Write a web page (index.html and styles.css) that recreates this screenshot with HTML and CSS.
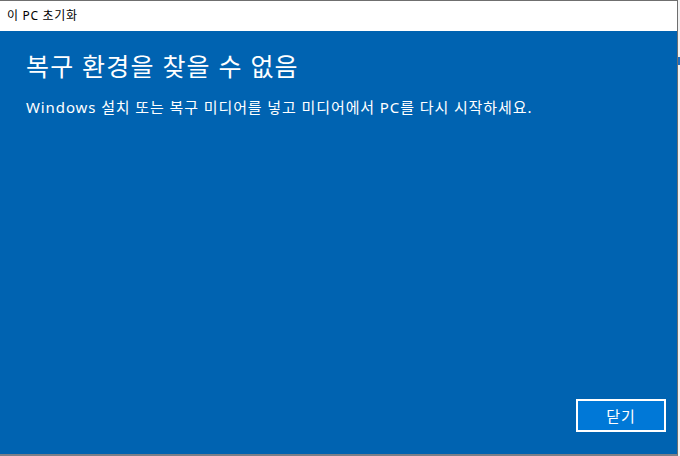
FILE: index.html
```html
<!DOCTYPE html>
<html lang="ko">
<head>
<meta charset="utf-8">
<title>이 PC 초기화</title>
<link rel="stylesheet" href="styles.css">
</head>
<body>
<div class="screen">
  <div class="window">
    <div class="titlebar">이 PC 초기화</div>
    <div class="content">
      <h1 class="heading">복구 환경을 찾을 수 없음</h1>
      <p class="message">Windows 설치 또는 복구 미디어를 넣고 미디어에서 PC를 다시 시작하세요.</p>
      <div class="footer">
        <button class="close-btn">닫기</button>
      </div>
    </div>
  </div>
  <div class="behind-mark"></div>
</div>
</body>
</html>
```

FILE: styles.css
```css
html, body {
  margin: 0;
  padding: 0;
}
body {
  width: 680px;
  height: 456px;
  overflow: hidden;
  background: #f3f3f3;
  font-family: "Noto Sans", "Noto Sans CJK KR", sans-serif;
}
.screen {
  position: relative;
  width: 680px;
  height: 456px;
}
.window {
  box-sizing: border-box;
  width: 678px;
  height: 456px;
  border-top: 1px solid #6f6f6f;
  border-right: 1px solid #6f6f6f;
  border-bottom: 2px solid #7c7f88;
  display: flex;
  flex-direction: column;
}
.titlebar {
  height: 30px;
  flex: none;
  background: #ffffff;
  color: #000;
  font-size: 12px;
  line-height: 30px;
  padding-left: 7px;
  letter-spacing: 0.7px;
}
.content {
  flex: 1;
  background: #0063b1;
  color: #ffffff;
  padding: 18px 11px 22px 26px;
  display: flex;
  flex-direction: column;
}
.heading {
  margin: 0;
  font-size: 25px;
  font-weight: normal;
  line-height: 34px;
  letter-spacing: 1.2px;
}
.message {
  margin: 14px 0 0;
  font-size: 15px;
  line-height: 20px;
  letter-spacing: 0.9px;
}
.footer {
  margin-top: auto;
  display: flex;
  justify-content: flex-end;
}
.close-btn {
  box-sizing: border-box;
  width: 90px;
  height: 33px;
  border: 2px solid #ffffff;
  background: #0078d7;
  color: #ffffff;
  font-family: "Noto Sans CJK KR", sans-serif;
  font-size: 15px;
  letter-spacing: 1px;
  padding: 0;
}
.behind-mark {
  position: absolute;
  left: 678px;
  top: 57px;
  width: 2px;
  height: 8px;
  background: #1f6fc0;
}
```
